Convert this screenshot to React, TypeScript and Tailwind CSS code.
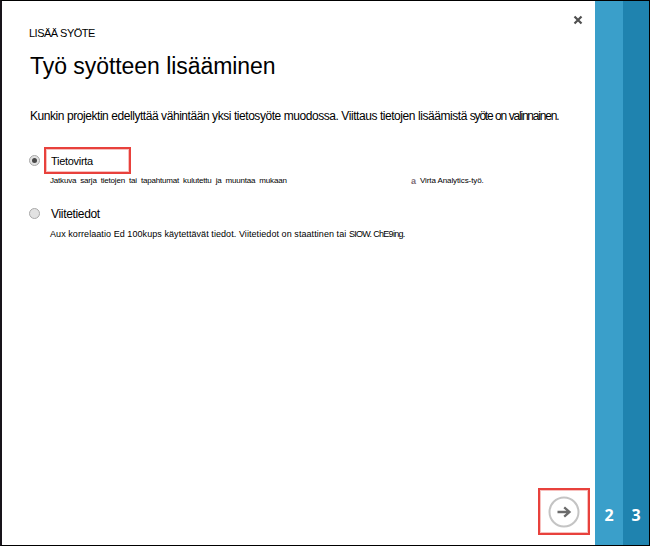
import React from "react";

function Radio({ checked = false }: { checked?: boolean }) {
  return (
    <span
      role="radio"
      aria-checked={checked}
      className="flex size-[11px] shrink-0 items-center justify-center rounded-full border border-[#a9a9a9] bg-[#e2e2e2]"
    >
      {checked && <span className="size-[5px] rounded-full bg-[#484848]" />}
    </span>
  );
}

function Step({ label, tone }: { label: string; tone: string }) {
  return (
    <div className={`flex items-end justify-center pb-[20px] font-['Open_Sans',sans-serif] text-[16px] leading-[20px] font-bold text-white ${tone}`}>
      {label}
    </div>
  );
}

export default function App() {
  return (
    <div className="flex h-[546px] w-[650px] overflow-hidden border border-l-2 border-black border-l-[#18141a] bg-white font-['Liberation_Sans',Arial,sans-serif] whitespace-nowrap text-black">
      <main className="flex w-[593px] shrink-0 flex-col pl-[27px]">
        <div className="flex h-[40px] justify-between pr-[12px]">
          <p className="pt-[26px] text-[11px] leading-[13px] tracking-[-0.52px]">LISÄÄ SYÖTE</p>
          <svg className="mt-[14px] size-[10px]" viewBox="0 0 10 10" stroke="#505050" strokeWidth="2.2" aria-label="Close">
            <path d="M1.5 1.5 8.5 8.5M8.5 1.5 1.5 8.5" />
          </svg>
        </div>
        <h1 className="mt-[10px] h-[30px] pl-[1px] text-[23px] leading-[30px] tracking-[-0.05px]">Työ syötteen lisääminen</h1>
        <p className="mt-[27px] h-[16px] pl-[1px] text-[12px] leading-[16px]">
          <span className="tracking-[-0.44px]">Kunkin projektin edellyttää vähintään yksi tietosyöte muodossa. Viittaus tietojen lisäämistä </span>
          <span className="tracking-[-1.2px] [word-spacing:0.5px]">syöte on valinnainen.</span>
        </p>
        <div className="mt-[23px] flex h-[27px] items-center">
          <Radio checked />
          <div className="ml-[4px] flex h-[27px] w-[87px] items-center border-[2px] border-[#e8413c] pt-[2px] pl-[5px] text-[11px] tracking-[-0.3px] shadow-[inset_0_0_0_1px_#e8413c55]">
            Tietovirta
          </div>
        </div>
        <div className="flex h-[14px] items-center pl-[21px] text-[8px] leading-[14px]">
          <span className="w-[361px] tracking-[-0.19px] [word-spacing:2px]">Jatkuva sarja tietojen tai tapahtumat kulutettu ja muuntaa mukaan</span>
          <span className="w-[9px] text-[9px] font-bold text-[#7c6b75]">a</span>
          <span className="tracking-[-0.1px]">Virta Analytics-työ.</span>
        </div>
        <div className="mt-[16px] flex h-[18px] items-center">
          <Radio />
          <span className="ml-[11px] pt-[1px] text-[12px] leading-[16px] tracking-[-0.33px]">Viitetiedot</span>
        </div>
        <p className="mt-[6px] pl-[21px] text-[9px] leading-[12px]">
          <span className="tracking-[0.07px]">Aux korrelaatio Ed 100kups käytettävät tiedot. Viitetiedot on staattinen tai </span>
          <span className="tracking-[-0.7px]">SIOW. ChE9ing.</span>
        </p>
        <button className="mt-auto mr-[5px] mb-[10px] flex h-[47px] w-[52px] items-center justify-center self-end border-[2px] border-[#e8413c] shadow-[inset_0_0_0_1px_#e8413c55]" aria-label="Next">
          <svg className="size-[32px]" viewBox="0 0 32 32" fill="none">
            <circle cx="16" cy="16" r="14.5" stroke="#c4c4c4" strokeWidth="2" />
            <path d="M9.5 16H21.5M16.2 11.3 21.5 16 16.2 20.7" stroke="#6b6b6b" strokeWidth="2.3" />
          </svg>
        </button>
      </main>
      <aside className="grid flex-1 grid-cols-[28px_1fr]">
        <Step label="2" tone="bg-[#3a9fca]" />
        <Step label="3" tone="bg-[#1f83af]" />
      </aside>
    </div>
  );
}
